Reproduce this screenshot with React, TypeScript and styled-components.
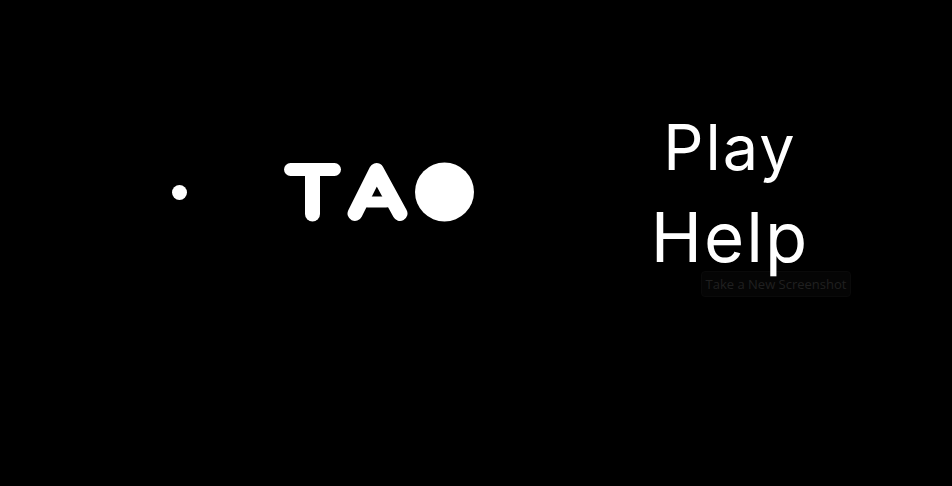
import styled, { createGlobalStyle } from 'styled-components';

const GlobalStyle = createGlobalStyle`
  html, body {
    margin: 0;
    height: 100%;
    background-color: #000;
  }
`;

const Page = styled.div`
  position: relative;
  width: 952px;
  height: 486px;
  overflow: hidden;
  background-color: #000;
`;

const Stage = styled.main`
  display: flex;
  align-items: center;
  height: 384px;
  padding-left: 172px;
`;

const Dot = styled.div`
  width: 15px;
  height: 15px;
  border-radius: 50%;
  background-color: #fff;
  margin-right: 97px;
`;

const Logo = styled.svg`
  display: block;
  width: 192px;
  height: 62px;
  margin-right: 175px;
`;

const Menu = styled.nav`
  display: flex;
  flex-direction: column;
  align-items: center;
  width: 158px;
  position: relative;
  z-index: 1;
`;

const MenuItem = styled.a<{ $size: number }>`
  display: block;
  font-family: 'Inter', 'Open Sans', sans-serif;
  font-weight: 400;
  font-size: ${({ $size }) => $size}px;
  line-height: 90px;
  letter-spacing: 2px;
  color: #fff;
  cursor: pointer;
`;

const ScreenshotButton = styled.button`
  position: absolute;
  left: 701px;
  top: 271px;
  width: 150px;
  height: 26px;
  padding: 0;
  border: 1px solid #0a0a0a;
  border-radius: 4px;
  background-color: #050505;
  color: #202020;
  font-family: 'Open Sans', sans-serif;
  font-size: 13px;
  text-align: center;
`;

function App() {
  return (
    <Page>
      <GlobalStyle />
      <Stage>
        <Dot />
        <Logo viewBox="0 0 192 62" role="img" aria-label="TAO">
          <g stroke="#fff" strokeLinecap="round" strokeLinejoin="round" fill="none">
            <line x1="6.5" y1="8.5" x2="50.5" y2="8.5" strokeWidth="13" />
            <line x1="28.5" y1="15" x2="28.5" y2="53" strokeWidth="15" />
            <polyline points="71,52.5 92.5,9.5 116,52.5" strokeWidth="15" />
            <line x1="84" y1="41" x2="102" y2="41" strokeWidth="11" />
          </g>
          <circle cx="160.5" cy="31" r="29.5" fill="#fff" />
        </Logo>
        <Menu>
          <MenuItem $size={63}>Play</MenuItem>
          <MenuItem $size={69}>Help</MenuItem>
        </Menu>
      </Stage>
      <ScreenshotButton>Take a New Screenshot</ScreenshotButton>
    </Page>
  );
}

export default App;
